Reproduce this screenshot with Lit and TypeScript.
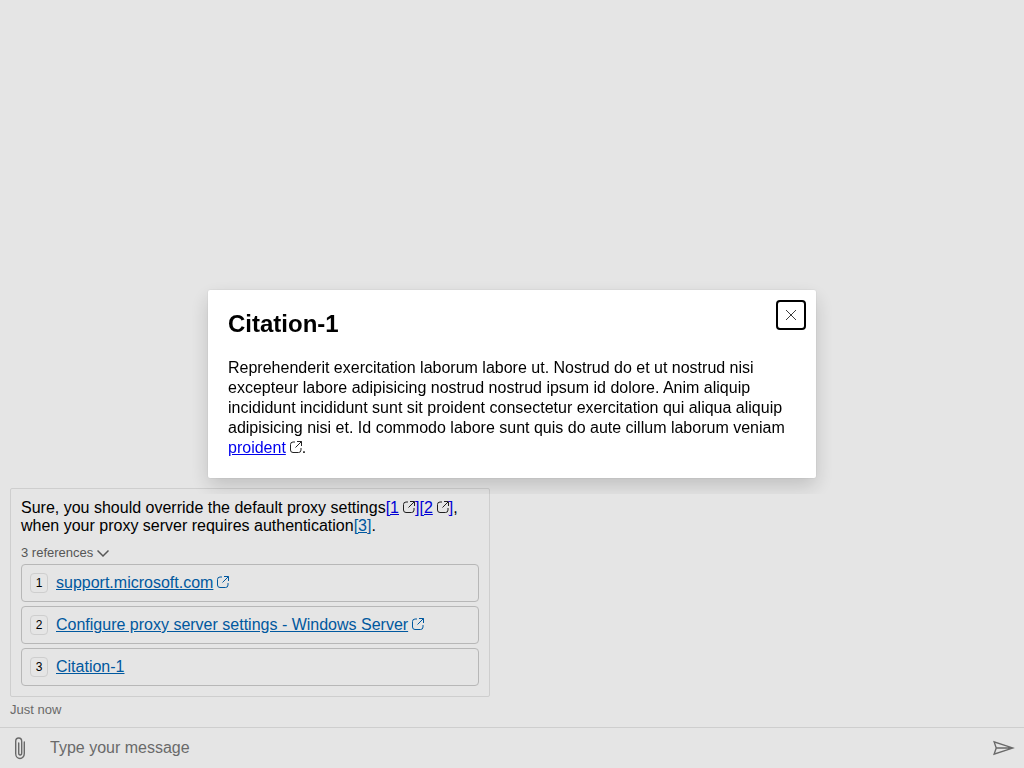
import { LitElement, html, css, svg } from "lit";
import { customElement, query } from "lit/decorators.js";

interface Reference {
  label: string;
  external: boolean;
}

const references: Reference[] = [
  { label: "support.microsoft.com", external: true },
  { label: "Configure proxy server settings - Windows Server", external: true },
  { label: "Citation-1", external: false },
];

const openIcon = html`<svg class="open-icon" viewBox="0 0 12 12" aria-hidden="true">
  ${svg`<path d="M5 1H3A2.500 2.500 0 0 0 .5 3.500V9A2.500 2.500 0 0 0 3 11.500h5.500A2.500 2.500 0 0 0 11 9V7M5.500 6.500l6-6M7 .5h4.500V5" />`}
</svg>`;

@customElement("app-root")
export class AppRoot extends LitElement {
  static styles = css`
    :host {
      display: flex;
      flex-direction: column;
      min-height: 100vh;
      font-family: "Liberation Sans", Arial, sans-serif;
      font-size: 16px;
      color: #000;
      background: #fff;
    }
    .transcript {
      flex: 1;
      display: flex;
      flex-direction: column;
      justify-content: flex-end;
      padding: 10px;
    }
    .activity {
      width: 100%;
      max-width: 480px;
    }
    .bubble {
      border: 1px solid #e6e6e6;
      border-radius: 2px;
      padding: 10px;
    }
    .message {
      margin: 0;
      line-height: 18px;
    }
    .open-icon {
      width: 12px;
      height: 12px;
      margin-left: 4px;
      overflow: visible;
      fill: none;
      stroke: #242424;
      stroke-width: 1;
      stroke-linejoin: round;
    }
    .plain {
      color: #0000ee;
    }
    .themed {
      color: #0063b1;
    }
    .themed .open-icon {
      stroke: #0063b1;
    }
    .references {
      margin-top: 10px;
    }
    .summary {
      display: flex;
      align-items: center;
      gap: 4px;
      list-style: none;
      font-size: 13px;
      line-height: 15px;
      color: #616161;
      cursor: pointer;
    }
    .chevron {
      width: 12px;
      height: 12px;
      fill: none;
      stroke: #616161;
      stroke-width: 1.5;
    }
    .list {
      display: grid;
      gap: 4px;
      margin: 4px 0 0;
      padding: 0;
      list-style: none;
    }
    .item {
      display: flex;
      align-items: center;
      gap: 8px;
      padding: 8px;
      border: 1px solid #ccc;
      border-radius: 4px;
      line-height: 18px;
    }
    .badge {
      box-sizing: border-box;
      width: 18px;
      height: 20px;
      border: 1px solid #e6e6e6;
      border-radius: 4px;
      font-size: 12px;
      text-align: center;
    }
    .status {
      margin: 5px 0 0;
      font-size: 13px;
      line-height: 15px;
      color: #767676;
    }
    .send-box {
      display: flex;
      align-items: stretch;
      height: 40px;
      border-top: 1px solid #e6e6e6;
    }
    .icon-button {
      display: flex;
      align-items: center;
      justify-content: center;
      width: 40px;
      padding: 0;
      border: 0;
      background: none;
      color: #767676;
    }
    .send-icon {
      width: 28px;
      height: 28px;
      fill: currentColor;
    }
    .clip-icon {
      width: 40px;
      height: 40px;
      fill: none;
      stroke: currentColor;
      stroke-width: 1.4;
      stroke-linecap: round;
    }
    .text-box {
      flex: 1;
      min-width: 0;
      padding: 0 10px;
      border: 0;
      outline: 0;
      background: none;
      font: inherit;
    }
    .text-box::placeholder {
      color: #767676;
      opacity: 1;
    }
    .dialog {
      box-sizing: border-box;
      width: 100%;
      max-width: 640px;
      padding: 16px;
      border: 0;
      overflow: hidden;
      background: none;
      color: #000;
    }
    .dialog::backdrop {
      background: rgba(0, 0, 0, 0.1);
    }
    .panel {
      border-radius: 2px;
      background: #fff;
      box-shadow: 0 8px 20px rgba(0, 0, 0, 0.17), 0 0 2px rgba(0, 0, 0, 0.12);
    }
    .close {
      float: right;
      display: flex;
      align-items: center;
      justify-content: center;
      width: 30px;
      height: 30px;
      margin: 10px 10px 0 0;
      padding: 0;
      border: 2px solid #000;
      border-radius: 4px;
      outline: 0;
      background: #fff;
    }
    .close-icon {
      width: 10px;
      height: 10px;
      overflow: visible;
      stroke: #3b3b3b;
      stroke-width: 1;
    }
    .content {
      padding: 20px;
    }
    .title {
      margin: 0 0 20px;
      font-size: 24px;
      line-height: 28px;
    }
    .text {
      margin: 0;
      line-height: 20px;
    }
  `;

  @query(".dialog") private dialog!: HTMLDialogElement;

  protected firstUpdated() {
    this.dialog.showModal();
  }

  private showCitation(event: Event) {
    event.preventDefault();
    this.dialog.showModal();
  }

  private closeCitation() {
    this.dialog.close();
  }

  private renderReference(item: Reference, index: number) {
    return html`<li class="item">
      <span class="badge">${index + 1}</span>
      <span class="themed">${item.external
        ? html`<a class="themed" href="#ref-${index + 1}">${item.label}${openIcon}</a>`
        : html`<a class="themed" href="#citation" @click=${this.showCitation}>${item.label}</a>`}</span>
    </li>`;
  }

  render() {
    return html`
      <main class="transcript">
        <article class="activity">
          <div class="bubble">
            <p class="message">Sure, you should override the default proxy settings<a class="plain" href="#ref-1">[1${openIcon}]</a><a class="plain" href="#ref-2">[2${openIcon}]</a>, when your proxy server requires authentication<a class="themed" href="#citation" @click=${this.showCitation}>[3]</a>.</p>
            <details class="references" open>
              <summary class="summary">
                3 references
                <svg class="chevron" viewBox="0 0 12 12" aria-hidden="true"><path d="M.5 3.500 6 9l5.500-5.500" /></svg>
              </summary>
              <ol class="list">${references.map((item, index) => this.renderReference(item, index))}</ol>
            </details>
          </div>
          <p class="status">Just now</p>
        </article>
      </main>
      <form class="send-box" @submit=${(event: Event) => event.preventDefault()}>
        <button class="icon-button" type="button" aria-label="Upload file">
          <svg class="clip-icon" viewBox="0 0 40 40" aria-hidden="true">
            <path d="M24.300 14v11.500a4.300 5 0 0 1-8.600 0V13.500a3 3.500 0 0 1 6 0V25a1.500 2 0 0 1-3 0V15" />
          </svg>
        </button>
        <input class="text-box" type="text" placeholder="Type your message" aria-label="Message" />
        <button class="icon-button" type="submit" aria-label="Send">
          <svg class="send-icon" viewBox="0 0 45.7 33.8" aria-hidden="true">
            <path clip-rule="evenodd" fill-rule="evenodd" d="M8.55 25.25l21.67-7.25H11zm2.41-9.47h19.26l-21.67-7.23zm-6 13l4-11.9L5 5l35.7 11.9z" />
          </svg>
        </button>
      </form>
      <dialog class="dialog" aria-labelledby="citation-title">
        <div class="panel">
          <button class="close" type="button" aria-label="Close" @click=${this.closeCitation}>
            <svg class="close-icon" viewBox="0 0 10 10" aria-hidden="true"><path d="M0 0l10 10M10 0L0 10" /></svg>
          </button>
          <div class="content">
            <h1 class="title" id="citation-title">Citation-1</h1>
            <p class="text">Reprehenderit exercitation laborum labore ut. Nostrud do et ut nostrud nisi excepteur labore adipisicing nostrud nostrud ipsum id dolore. Anim aliquip incididunt incididunt sunt sit proident consectetur exercitation qui aliqua aliquip adipisicing nisi et. Id commodo labore sunt quis do aute cillum laborum veniam <a class="plain" href="#proident">proident${openIcon}</a>.</p>
          </div>
        </div>
      </dialog>
    `;
  }
}
